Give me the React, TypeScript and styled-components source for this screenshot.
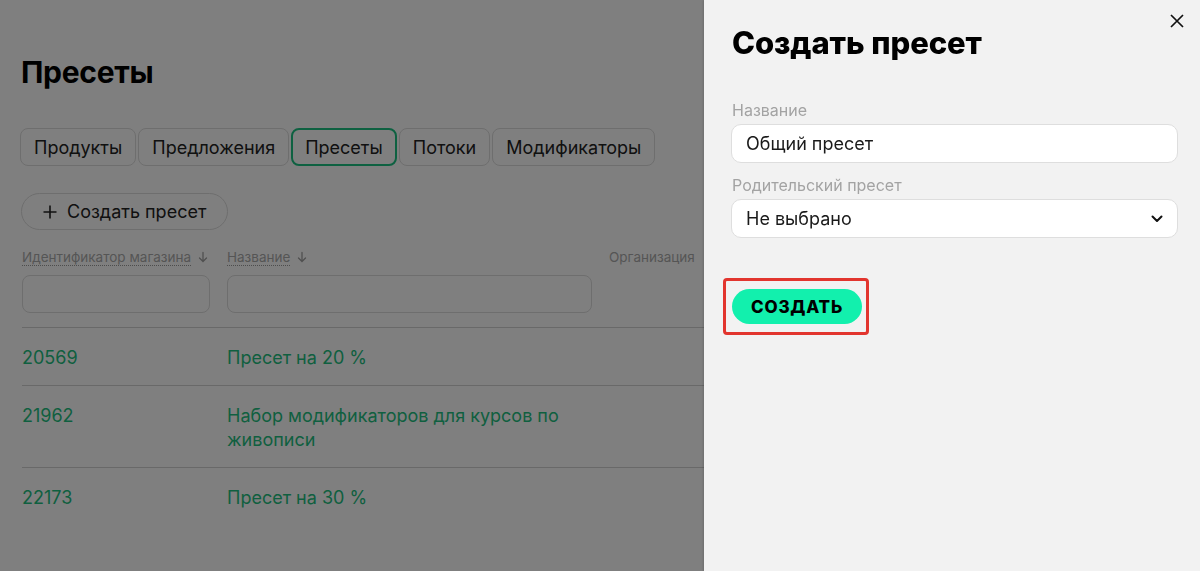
import styled, { createGlobalStyle } from 'styled-components';

const GlobalStyle = createGlobalStyle`
  html, body {
    margin: 0;
    padding: 0;
    background: #ffffff;
    font-family: Inter, "Noto Sans", sans-serif;
    color: #1f1f1f;
    overflow: hidden;
  }
  * {
    box-sizing: border-box;
  }
`;

const Page = styled.div`
  padding: 52px 22px 0 20px;
  width: 1200px;
`;

const PageTitle = styled.h1`
  margin: 0 0 36px 1px;
  font-size: 30px;
  line-height: 40px;
  font-weight: 700;
  color: #000;
  letter-spacing: -0.3px;
`;

const Tabs = styled.div`
  display: flex;
  gap: 2px;
  margin-bottom: 27px;
`;

const Tab = styled.div<{ active?: boolean }>`
  height: 38px;
  padding: 0 ${({ active }) => (active ? '12px' : '13px')};
  display: flex;
  align-items: center;
  border: ${({ active }) => (active ? '2px solid #1cc283' : '1px solid #dcdcdc')};
  border-radius: 8px;
  font-size: 18px;
  color: #222;
`;

const AddButton = styled.button`
  height: 37px;
  margin-left: 1px;
  padding: 0 21px 0 21px;
  display: flex;
  align-items: center;
  gap: 10px;
  border: 1px solid #dcdcdc;
  border-radius: 19px;
  background: transparent;
  font-family: inherit;
  font-size: 18px;
  color: #222;
`;

const Table = styled.div`
  margin-top: 18px;
  margin-left: 2px;
`;

const Grid = styled.div`
  display: grid;
  grid-template-columns: 188px 365px 1fr;
  column-gap: 17px;
`;

const HeadRow = styled(Grid)`
  align-items: start;
  padding-bottom: 14px;
  border-bottom: 1px solid #d2d2d2;
`;

const HeadCell = styled.div`
  display: flex;
  flex-direction: column;
  gap: 9px;
`;

const HeadLabel = styled.div<{ plain?: boolean }>`
  font-size: 13.5px;
  line-height: 18px;
  color: #ababab;
  white-space: nowrap;
  span {
    border-bottom: ${({ plain }) => (plain ? 'none' : '1px dotted #9a9a9a')};
  }
`;

const Arrow = styled.svg`
  width: 12px;
  height: 12px;
  margin-left: 6px;
  vertical-align: -1px;
`;

const FilterInput = styled.div`
  height: 38px;
  border: 1px solid #dcdcdc;
  border-radius: 8px;
`;

const Row = styled(Grid)`
  padding: 18px 0 15px;
  border-bottom: 1px solid #d2d2d2;
  font-size: 18px;
  line-height: 24px;
  color: #1ec080;
  &:last-child {
    border-bottom: none;
  }
`;

const Overlay = styled.div`
  position: fixed;
  inset: 0;
  background: rgba(0, 0, 0, 0.5);
`;

const Panel = styled.aside`
  position: fixed;
  top: 0;
  right: 0;
  bottom: 0;
  width: 496px;
  background: #f2f2f2;
  padding: 23px 22px 0 28px;
  box-shadow: -1px 0 2px rgba(0, 0, 0, 0.15);
`;

const CloseButton = styled.button`
  position: absolute;
  top: 12px;
  right: 14px;
  width: 18px;
  height: 18px;
  padding: 0;
  border: none;
  background: transparent;
  display: flex;
  align-items: center;
  justify-content: center;
`;

const PanelTitle = styled.h2`
  margin: 0 0 37px 0;
  font-size: 31px;
  line-height: 40px;
  font-weight: 800;
  color: #000;
  letter-spacing: -0.1px;
`;

const Field = styled.div`
  display: flex;
  flex-direction: column;
  gap: 4px;
  margin-bottom: 12px;
`;

const FieldLabel = styled.label`
  font-size: 16px;
  line-height: 20px;
  color: #a3a3a3;
`;

const TextBox = styled.div`
  height: 39px;
  margin-left: -1px;
  padding: 0 14px;
  display: flex;
  align-items: center;
  justify-content: space-between;
  background: #fff;
  border: 1px solid #dedede;
  border-radius: 10px;
  font-size: 18px;
  color: #1a1a1a;
`;

const Highlight = styled.div`
  display: inline-flex;
  margin: 28px 0 0 -9px;
  padding: 8px 4px 8px 6px;
  border: 3px solid #e2352e;
  border-radius: 4px;
`;

const SubmitButton = styled.button`
  height: 35px;
  padding: 0 19px;
  border: none;
  border-radius: 18px;
  background: #12f0ad;
  font-family: inherit;
  font-size: 17px;
  font-weight: 800;
  letter-spacing: 0.8px;
  color: #000;
`;

const ArrowDown = () => (
  <Arrow viewBox="0 0 12 12" fill="none" stroke="#a0a0a0" strokeWidth="1.3" strokeLinecap="round">
    <path d="M6 1.5v9M2.5 7l3.5 3.5L9.5 7" />
  </Arrow>
);

const tabs = ['Продукты', 'Предложения', 'Пресеты', 'Потоки', 'Модификаторы'];

const rows = [
  { id: '20569', name: 'Пресет на 20 %' },
  { id: '21962', name: 'Набор модификаторов для курсов по живописи' },
  { id: '22173', name: 'Пресет на 30 %' },
];

export default function App() {
  return (
    <>
      <GlobalStyle />
      <Page>
        <PageTitle>Пресеты</PageTitle>
        <Tabs>
          {tabs.map((t) => (
            <Tab key={t} active={t === 'Пресеты'}>
              {t}
            </Tab>
          ))}
        </Tabs>
        <AddButton>
          <svg width="14" height="14" viewBox="0 0 14 14" stroke="#222" strokeWidth="1.6">
            <path d="M7 0.5v13M0.5 7h13" />
          </svg>
          Создать пресет
        </AddButton>
        <Table>
          <HeadRow>
            <HeadCell>
              <HeadLabel>
                <span>Идентификатор магазина</span>
                <ArrowDown />
              </HeadLabel>
              <FilterInput />
            </HeadCell>
            <HeadCell>
              <HeadLabel>
                <span>Название</span>
                <ArrowDown />
              </HeadLabel>
              <FilterInput />
            </HeadCell>
            <HeadCell>
              <HeadLabel plain>
                <span>Организация</span>
              </HeadLabel>
            </HeadCell>
          </HeadRow>
          {rows.map((r) => (
            <Row key={r.id}>
              <div>{r.id}</div>
              <div>{r.name}</div>
              <div />
            </Row>
          ))}
        </Table>
      </Page>
      <Overlay />
      <Panel>
        <CloseButton>
          <svg width="14" height="14" viewBox="0 0 14 14" stroke="#111" strokeWidth="1.7">
            <path d="M1 1l12 12M13 1L1 13" />
          </svg>
        </CloseButton>
        <PanelTitle>Создать пресет</PanelTitle>
        <Field>
          <FieldLabel>Название</FieldLabel>
          <TextBox>Общий пресет</TextBox>
        </Field>
        <Field>
          <FieldLabel>Родительский пресет</FieldLabel>
          <TextBox>
            Не выбрано
            <svg width="12" height="8" viewBox="0 0 12 8" fill="none" stroke="#111" strokeWidth="2" strokeLinecap="round" strokeLinejoin="round">
              <path d="M1.5 1.5L6 6l4.5-4.5" />
            </svg>
          </TextBox>
        </Field>
        <Highlight>
          <SubmitButton>СОЗДАТЬ</SubmitButton>
        </Highlight>
      </Panel>
    </>
  );
}
